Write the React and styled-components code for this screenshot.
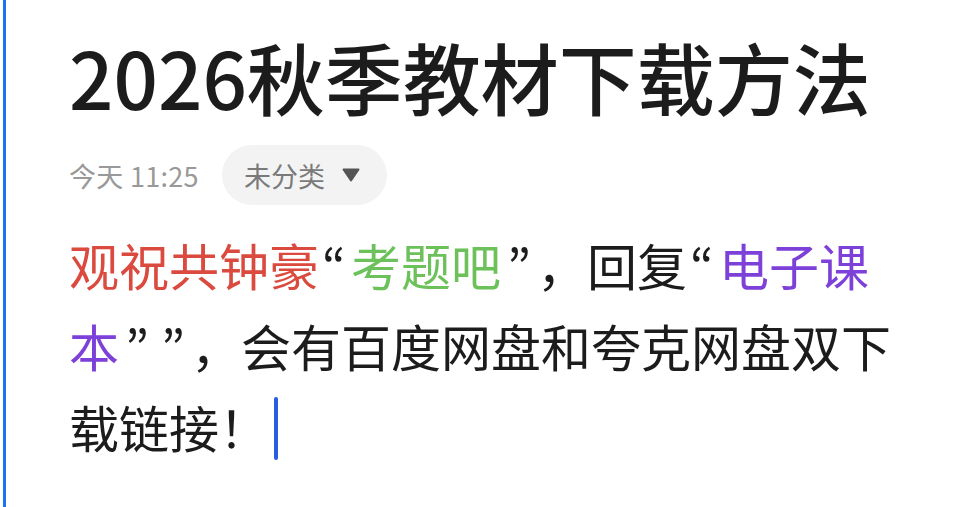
import React from "react";
import styled, { createGlobalStyle } from "styled-components";

const GlobalStyle = createGlobalStyle`
  html, body {
    margin: 0;
    padding: 0;
    background: #ffffff;
  }
  body {
    font-family: "Noto Sans CJK SC", "Noto Sans", sans-serif;
    color: #1c1c1c;
  }
`;

const Page = styled.div`
  height: 507px;
  padding-left: 3px;
  display: flex;
  overflow: hidden;
`;

const Editor = styled.div`
  flex: 1;
  border-left: 3px solid #1b72f2;
  padding: 29px 0 0 63px;
  display: flex;
  flex-direction: column;
`;

const Title = styled.h1`
  margin: 0;
  font-size: 78px;
  font-weight: 500;
  line-height: 94px;
  color: #1c1c1c;
  white-space: nowrap;
`;

const Meta = styled.div`
  display: flex;
  align-items: center;
  gap: 23px;
  margin-top: 22px;
  height: 60px;
`;

const Time = styled.span`
  font-size: 27px;
  letter-spacing: 0.3px;
  color: #999999;
`;

const Category = styled.button`
  display: flex;
  align-items: center;
  gap: 16px;
  height: 60px;
  padding: 0 26px 0 22px;
  border: none;
  border-radius: 30px;
  background: #f3f3f3;
  font-family: inherit;
  font-size: 27px;
  color: #7a7a7a;
`;

const Caret = styled.svg`
  width: 20px;
  height: 14px;
  display: block;
`;

const Body = styled.p`
  margin: 19px 0 0;
  width: 836px;
  font-size: 50px;
  line-height: 81px;
  color: #1c1c1c;
`;

const Tint = styled.span`
  color: ${(p) => p.$color};
`;

const Quote = styled.span`
  display: inline-block;
  width: ${(p) => (p.$close ? 36 : 32)}px;
  text-align: ${(p) => (p.$close ? "center" : "left")};
  padding-left: ${(p) => (p.$close ? 0 : 3)}px;
  box-sizing: border-box;
  font-family: "Noto Sans CJK JP", sans-serif;
  color: #1c1c1c;
`;

const Cursor = styled.span`
  display: inline-block;
  width: 4px;
  height: 63px;
  margin-left: 5px;
  border-radius: 2px;
  background: #2a5ce0;
  vertical-align: -12px;
`;

export default function App() {
  return (
    <>
      <GlobalStyle />
      <Page>
        <Editor>
          <Title>2026秋季教材下载方法</Title>
          <Meta>
            <Time>今天 11:25</Time>
            <Category>
              未分类
              <Caret viewBox="0 0 20 14">
                <path
                  d="M2.5 1.5h15L10 12.5z"
                  fill="#555"
                  stroke="#555"
                  strokeWidth="2"
                  strokeLinejoin="round"
                />
              </Caret>
            </Category>
          </Meta>
          <Body>
            <Tint $color="#db4a3f">观祝共钟豪</Tint>
            <Quote>“</Quote>
            <Tint $color="#6cc15a">考题吧</Tint>
            <Quote $close>”</Quote>，回复<Quote>“</Quote>
            <Tint $color="#7d40d8">电子课本</Tint>
            <Quote $close>”</Quote>
            <Quote $close>”</Quote>，会有百度网盘和夸克网盘双下载链接！
            <Cursor />
          </Body>
        </Editor>
      </Page>
    </>
  );
}
